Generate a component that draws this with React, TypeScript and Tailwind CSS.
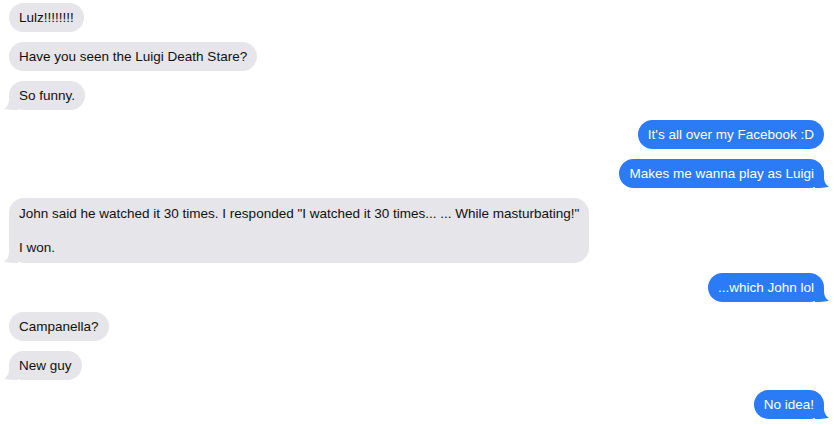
import React from "react";

type Msg = { from: "them" | "me"; text: string; tail?: boolean };

const messages: Msg[] = [
  { from: "them", text: "Lulz!!!!!!!!" },
  { from: "them", text: "Have you seen the Luigi Death Stare?" },
  { from: "them", text: "So funny.", tail: true },
  { from: "me", text: "It's all over my Facebook :D" },
  { from: "me", text: "Makes me wanna play as Luigi", tail: true },
  {
    from: "them",
    text: 'John said he watched it 30 times. I responded "I watched it 30 times... ... While masturbating!"\n\nI won.',
    tail: true,
  },
  { from: "me", text: "...which John lol", tail: true },
  { from: "them", text: "Campanella?" },
  { from: "them", text: "New guy", tail: true },
  { from: "me", text: "No idea!", tail: true },
];

// Little curled tail under the last bubble of a group
function Tail({ side }: { side: "left" | "right" }) {
  const fill = side === "left" ? "#e5e5ea" : "#2b7bf6";
  if (side === "left") {
    return (
      <svg
        className="absolute bottom-0 -left-[5px]"
        width="14"
        height="14"
        viewBox="0 0 14 14"
      >
        <path d="M14 0 L14 14 L9 14 C6 14 3 13.6 0 12.6 C3 11 5 8 5 3 L5 0 Z" fill={fill} />
      </svg>
    );
  }
  return (
    <svg
      className="absolute bottom-0 -right-[5px]"
      width="14"
      height="14"
      viewBox="0 0 14 14"
    >
      <path d="M0 0 L0 14 L5 14 C8 14 11 13.6 14 12.6 C11 11 9 8 9 3 L9 0 Z" fill={fill} />
    </svg>
  );
}

function Bubble({ msg }: { msg: Msg }) {
  const mine = msg.from === "me";
  const multi = msg.text.includes("\n");
  return (
    <div className={`flex ${mine ? "justify-end" : "justify-start"}`}>
      <div
        className={`relative max-w-[620px] rounded-[15px] px-[10px] text-[13.5px] leading-[17px] whitespace-pre-line ${
          multi ? "py-[7px]" : "py-[6px]"
        } ${mine ? "bg-[#2b7bf6] text-white" : "bg-[#e5e5ea] text-[#111]"}`}
      >
        {msg.tail && <Tail side={mine ? "right" : "left"} />}
        <span className="relative">{msg.text}</span>
      </div>
    </div>
  );
}

export default function App() {
  return (
    <div
      className="w-[834px] h-[425px] bg-white overflow-hidden pt-[3px] pl-[9px] pr-[10px] flex flex-col gap-[10px]"
      style={{ fontFamily: '"Liberation Sans", Arial, sans-serif' }}
    >
      {messages.map((m, i) => (
        <Bubble key={i} msg={m} />
      ))}
    </div>
  );
}
